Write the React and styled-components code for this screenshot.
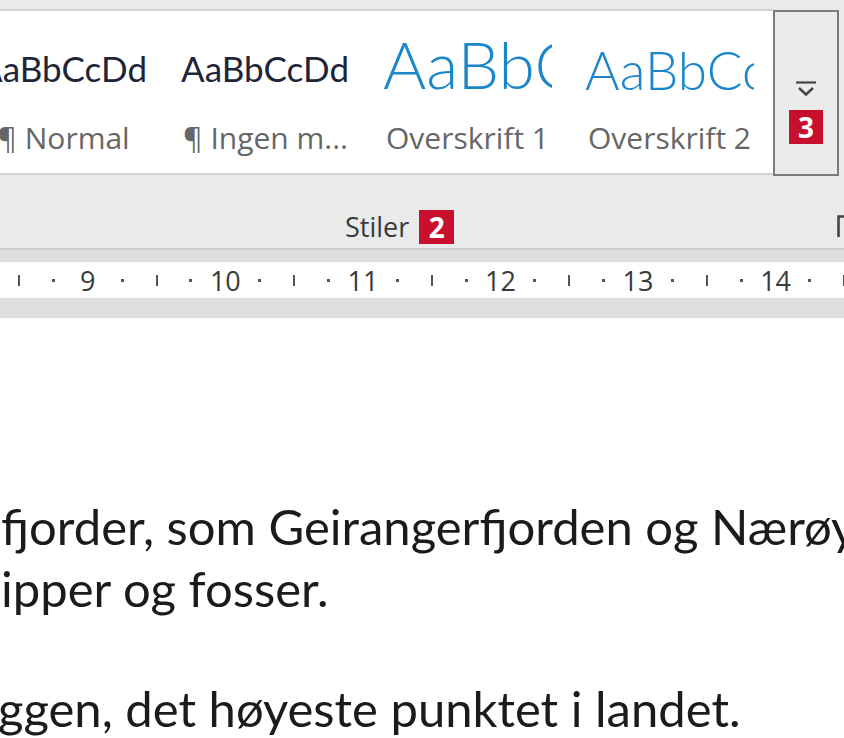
import React from 'react';
import styled, { createGlobalStyle } from 'styled-components';

const Global = createGlobalStyle`
  html, body { margin: 0; padding: 0; background: #fff; }
  body { width: 844px; height: 738px; overflow: hidden; font-family: "Open Sans", "Noto Sans", sans-serif; }
`;

const Page = styled.div`
  width: 844px;
  height: 738px;
  overflow: hidden;
  display: flex;
  flex-direction: column;
  background: #fff;
`;

const Ribbon = styled.div`
  flex: none;
  height: 248px;
  background: #e9eaea;
  border-bottom: 2px solid #cdcece;
  display: flex;
  flex-direction: column;
`;

const GalleryRow = styled.div`
  display: flex;
  margin-top: 9px;
  height: 167px;
`;

const Gallery = styled.div`
  box-sizing: border-box;
  width: 773px;
  height: 166px;
  background: #fff;
  border-top: 2px solid #cfd0d0;
  border-bottom: 2px solid #cfd0d0;
  overflow: hidden;
`;

const Track = styled.div`
  display: flex;
  gap: 33px;
  margin-left: -21px;
`;

const Cell = styled.div`
  flex: none;
  width: 169px;
  display: flex;
  flex-direction: column;
`;

const SampleBox = styled.div`
  height: 107px;
  overflow: hidden;
`;

const Sample = styled.div`
  font-family: Lato, "Noto Sans", sans-serif;
  font-size: ${p => p.$size}px;
  font-weight: ${p => p.$weight || 400};
  color: ${p => p.$color};
  line-height: 1;
  padding-top: ${p => p.$top}px;
  white-space: nowrap;
`;

const StyleName = styled.div`
  font-family: "Open Sans", "Noto Sans", sans-serif;
  font-size: 30px;
  line-height: 40px;
  color: #666;
  text-align: center;
  white-space: nowrap;
`;

const MoreButton = styled.div`
  box-sizing: border-box;
  width: 66px;
  height: 166px;
  margin-top: 1px;
  border: 2px solid #7c7c7c;
  background: #ebebeb;
  display: flex;
  flex-direction: column;
  align-items: center;
  padding-top: 69px;
  gap: 13px;
`;

const Badge = styled.div`
  box-sizing: border-box;
  width: ${p => p.$w || 34}px;
  height: 34px;
  background: #c8102e;
  color: #fff;
  font-family: "Open Sans", "Noto Sans", sans-serif;
  font-weight: 700;
  font-size: 28px;
  line-height: 34px;
  text-align: center;
  flex: none;
`;

const GroupFooter = styled.div`
  display: flex;
  align-items: flex-start;
  padding-top: 34px;
  padding-left: 345px;
`;

const GroupName = styled.div`
  font-family: "Open Sans", "Noto Sans", sans-serif;
  font-size: 27px;
  line-height: 34px;
  color: #3a3a3a;
  margin-right: 10px;
`;

const Launcher = styled.svg`
  margin-left: auto;
  margin-top: 5px;
  margin-right: -3px;
  flex: none;
`;

const RulerBand = styled.div`
  flex: none;
  background: #dedfdf;
  padding: 12px 0 20px;
`;

const Ruler = styled.div`
  height: 36px;
  background: #fff;
  overflow: hidden;
  display: flex;
  align-items: center;
`;

const RulerTrack = styled.div`
  display: flex;
  align-items: center;
  margin-left: -32.6px;
`;

const Mark = styled.div`
  flex: none;
  width: 34.4px;
  display: flex;
  justify-content: center;
  align-items: center;
  height: 36px;
  font-family: "Open Sans", "Noto Sans", sans-serif;
  font-size: 27px;
  color: #3a3a3a;
  white-space: nowrap;
`;

const Dot = styled.span`
  width: 3px;
  height: 3px;
  background: #555;
  margin-top: 1px;
`;

const Tick = styled.span`
  width: 2px;
  height: 11px;
  background: #555;
  margin-top: 1px;
`;

const Document = styled.div`
  flex: 1;
  padding-top: 177px;
  padding-left: 1px;
  font-family: Lato, "Noto Sans", sans-serif;
  font-size: 49px;
  line-height: 62px;
  color: #1b1b1b;
  overflow: hidden;
`;

const Para = styled.div`
  margin-top: ${p => p.$gap || 0}px;
  margin-left: ${p => p.$shift || 0}px;
`;

const Line = styled.div`
  white-space: nowrap;
`;

const styles = [
  { sample: 'AaBbCcDd', name: '¶ Normal', size: 35, top: 40, color: '#1e2536' },
  { sample: 'AaBbCcDd', name: '¶ Ingen m...', size: 35, top: 40, color: '#1e2536' },
  { sample: 'AaBbCcDd', name: 'Overskrift 1', size: 66, top: 20, color: '#1b87c8', weight: 300 },
  { sample: 'AaBbCcDd', name: 'Overskrift 2', size: 53, top: 32, color: '#1b87c8', weight: 300 },
];

function rulerMarks() {
  const marks = [{ t: 'dot' }, { t: 'tick' }, { t: 'dot' }];
  for (let n = 9; n <= 14; n++) {
    marks.push({ t: 'num', n }, { t: 'dot' }, { t: 'tick' }, { t: 'dot' });
  }
  return marks;
}

export default function App() {
  return (
    <Page>
      <Global />
      <Ribbon>
        <GalleryRow>
          <Gallery>
            <Track>
              {styles.map((s, i) => (
                <Cell key={i}>
                  <SampleBox>
                    <Sample $size={s.size} $top={s.top} $color={s.color} $weight={s.weight}>
                      {s.sample}
                    </Sample>
                  </SampleBox>
                  <StyleName>{s.name}</StyleName>
                </Cell>
              ))}
            </Track>
          </Gallery>
          <MoreButton>
            <svg width="22" height="16" viewBox="0 0 22 16">
              <path d="M1 1.5 H21" stroke="#444" strokeWidth="2.2" fill="none" />
              <path d="M4 7 L11 13.5 L18 7" stroke="#444" strokeWidth="2.4" fill="none" />
            </svg>
            <Badge>3</Badge>
          </MoreButton>
        </GalleryRow>
        <GroupFooter>
          <GroupName>Stiler</GroupName>
          <Badge $w={35}>2</Badge>
          <Launcher width="10" height="22" viewBox="0 0 10 22">
            <path d="M1.5 22 V1.5 H10" stroke="#444" strokeWidth="2.6" fill="none" />
          </Launcher>
        </GroupFooter>
      </Ribbon>
      <RulerBand>
        <Ruler>
          <RulerTrack>
            {rulerMarks().map((m, i) => (
              <Mark key={i}>
                {m.t === 'dot' && <Dot />}
                {m.t === 'tick' && <Tick />}
                {m.t === 'num' && m.n}
              </Mark>
            ))}
          </RulerTrack>
        </Ruler>
      </RulerBand>
      <Document>
        <Para>
          <Line>fjorder, som Geirangerfjorden og Nærøyfjorden,</Line>
          <Line>ipper og fosser.</Line>
        </Para>
        <Para $gap={58} $shift={-3}>
          <Line>ggen, det høyeste punktet i landet.</Line>
        </Para>
      </Document>
    </Page>
  );
}
